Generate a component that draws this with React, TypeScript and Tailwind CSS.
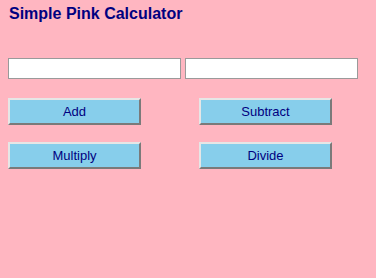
import React from "react";

export default function App() {
  const btn =
    "w-[133px] h-[27px] bg-[#87CEEB] text-[#000080] text-[13px] border-2 border-t-[#e6e6e6] border-l-[#e6e6e6] border-r-[#7a7a7a] border-b-[#7a7a7a] flex items-center justify-center";
  return (
    <div
      className="w-[376px] h-[278px] bg-[#FFB6C1] px-[8px] pt-[5px]"
      style={{ fontFamily: '"Liberation Sans", Arial, sans-serif' }}
    >
      <h1 className="text-[16px] leading-[18px] font-bold text-[#000080] pl-[1px]">
        Simple Pink Calculator
      </h1>
      <div className="flex gap-[4px] mt-[35px]">
        <input className="w-[173px] h-[21px] bg-white border border-[#9a9a9a] outline-none" />
        <input className="w-[173px] h-[21px] bg-white border border-[#9a9a9a] outline-none" />
      </div>
      <div className="flex gap-[58px] mt-[19px]">
        <button className={btn}>Add</button>
        <button className={btn}>Subtract</button>
      </div>
      <div className="flex gap-[58px] mt-[17px]">
        <button className={btn}>Multiply</button>
        <button className={btn}>Divide</button>
      </div>
    </div>
  );
}
